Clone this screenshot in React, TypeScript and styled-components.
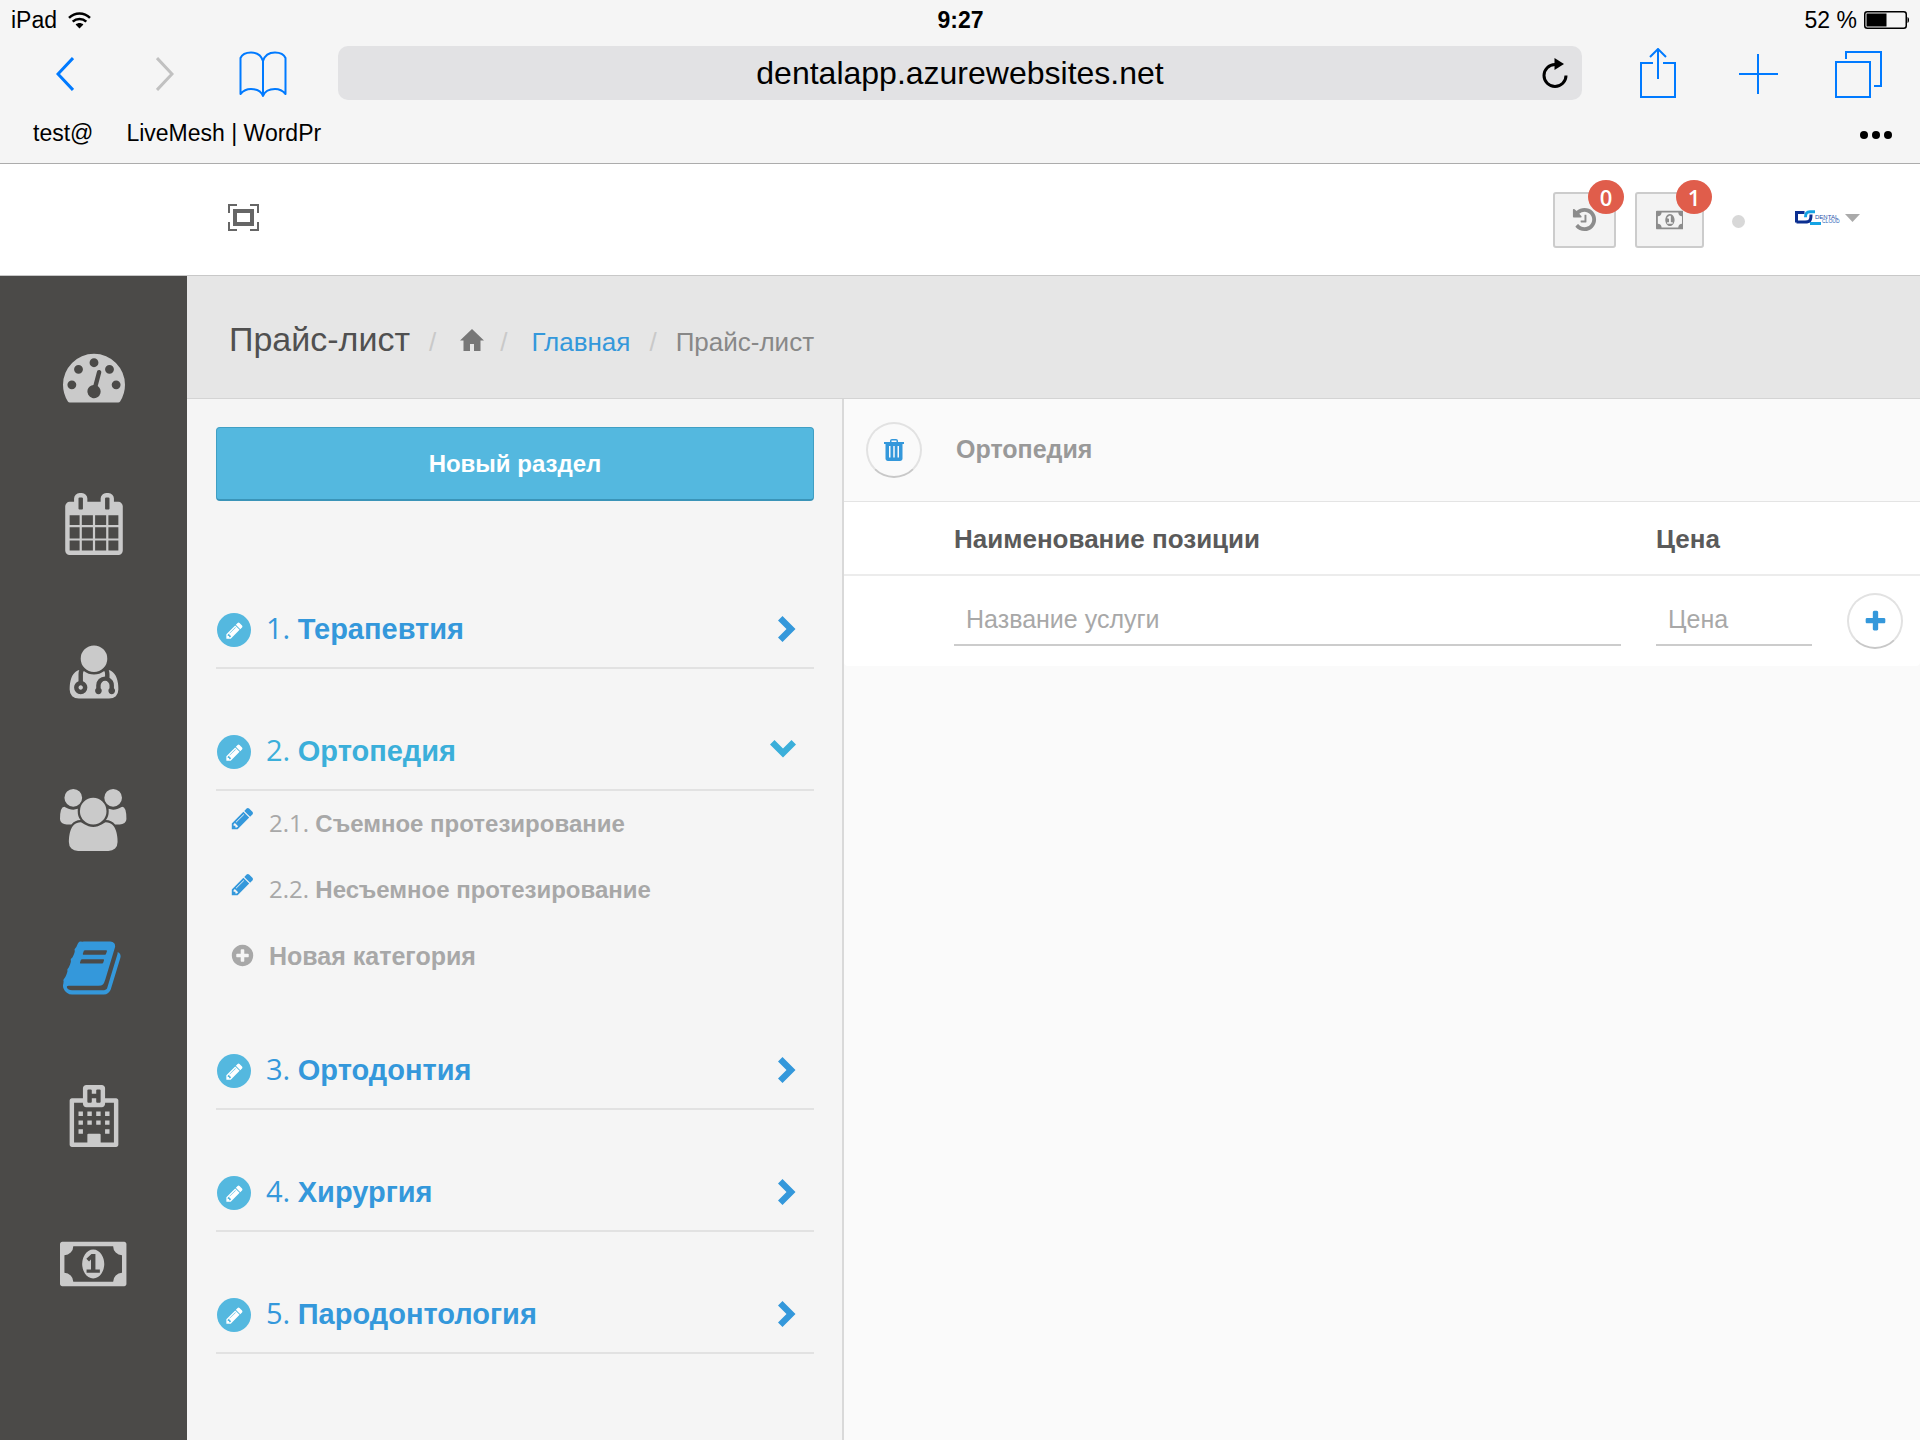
import React, { useState } from "react";
import styled, { createGlobalStyle, css } from "styled-components";

const sans = `"Liberation Sans", Arial, sans-serif`;
const humanist = `"Open Sans", "Noto Sans", sans-serif`;
const ios = "#007aff";
const blue = "#3498db";
const sky = "#54b8df";
const teal = "#3bafda";

const GlobalStyle = createGlobalStyle`
  *, *::before, *::after { box-sizing: border-box; }
  body { margin: 0; font-family: ${sans}; background: #fafafa; color: #555; }
  button { font: inherit; color: inherit; background: none; border: 0; padding: 0; cursor: pointer; }
  a { color: inherit; text-decoration: none; }
  h1, h2, ul, ol, p { margin: 0; padding: 0; font-weight: normal; }
  ul, ol { list-style: none; }
  svg { display: block; flex: none; }
`;

/* ---------- icons ---------- */

const paths = {
  gauge:
    "M384 1152q0-53-37.5-90.5t-90.5-37.5-90.5 37.5-37.5 90.5 37.5 90.5 90.5 37.5 90.5-37.5 37.5-90.5zm192-448q0-53-37.5-90.5t-90.5-37.5-90.5 37.5-37.5 90.5 37.5 90.5 90.5 37.5 90.5-37.5 37.5-90.5zm428 481l101-382q6-26-7.5-48.5t-38.5-29.5-48 6.5-30 39.5l-101 382q-60 5-107 43.5t-63 98.5q-20 77 20 146t117 89 146-20 89-117q16-60-6-117t-72-91zm660-33q0-53-37.5-90.5t-90.5-37.5-90.5 37.5-37.5 90.5 37.5 90.5 90.5 37.5 90.5-37.5 37.5-90.5zm-640-640q0-53-37.5-90.5t-90.5-37.5-90.5 37.5-37.5 90.5 37.5 90.5 90.5 37.5 90.5-37.5 37.5-90.5zm448 192q0-53-37.5-90.5t-90.5-37.5-90.5 37.5-37.5 90.5 37.5 90.5 90.5 37.5 90.5-37.5 37.5-90.5zm320 448q0 261-141 483-19 29-54 29h-1402q-35 0-54-29-141-221-141-483 0-182 71-348t191-286 286-191 348-71 348 71 286 191 191 286 71 348z",
  calendar:
    "M192 1664h288v-288h-288v288zm352 0h320v-288h-320v288zm-352-352h288v-320h-288v320zm352 0h320v-320h-320v320zm-352-384h288v-288h-288v288zm736 736h320v-288h-320v288zm-384-736h320v-288h-320v288zm768 736h288v-288h-288v288zm-384-352h320v-320h-320v320zm-352-864v-288q0-13-9.5-22.5t-22.5-9.5h-64q-13 0-22.5 9.5t-9.5 22.5v288q0 13 9.5 22.5t22.5 9.5h64q13 0 22.5-9.5t9.5-22.5zm736 864h288v-320h-288v320zm-384-384h320v-288h-320v288zm384 0h288v-288h-288v288zm32-480v-288q0-13-9.5-22.5t-22.5-9.5h-64q-13 0-22.5 9.5t-9.5 22.5v288q0 13 9.5 22.5t22.5 9.5h64q13 0 22.5-9.5t9.5-22.5zm384-64v1280q0 52-38 90t-90 38h-1408q-52 0-90-38t-38-90v-1280q0-52 38-90t90-38h128v-96q0-66 47-113t113-47h64q66 0 113 47t47 113v96h384v-96q0-66 47-113t113-47h64q66 0 113 47t47 113v96h128q52 0 90 38t38 90z",
  doctor:
    "M576 1344q0 26-19 45t-45 19-45-19-19-45 19-45 45-19 45 19 19 45zm1024 61q0 121-73 190t-194 69h-874q-121 0-194-69t-73-190q0-68 5.5-131t24-138 47.5-132.5 81-103 120-60.5q-22 52-22 120v203q-58 20-93 70t-35 111q0 80 56 136t136 56 136-56 56-136q0-61-35.5-111t-92.5-70v-203q0-62 25-93 132 104 295 104t295-104q25 31 25 93v64q-106 0-181 75t-75 181v89q-32 29-32 71 0 40 28 68t68 28 68-28 28-68q0-42-32-71v-89q0-52 38-90t90-38 90 38 38 90v89q-32 29-32 71 0 40 28 68t68 28 68-28 28-68q0-42-32-71v-89q0-68-34.5-127.5t-93.5-93.5q0-10 .5-42.5t0-48-2.5-41.5-7-47-13-40q68 15 120 60.5t81 103 47.5 132.5 24 138 5.5 131zm-320-893q0 159-112.5 271.5t-271.5 112.5-271.5-112.5-112.5-271.5 112.5-271.5 271.5-112.5 271.5 112.5 112.5 271.5z",
  people:
    "M593 896q-162 5-265 128h-134q-82 0-138-40.5t-56-118.5q0-353 124-353 6 0 43.5 21t97.5 42.5 119 21.5q67 0 133-23-5 37-5 66 0 159 81 256zm1071 637q0 120-73 189.5t-194 69.5h-874q-121 0-194-69.5t-73-189.5q0-53 3.5-103.5t14-109 26.5-108.5 43-97.5 62-81 85.5-53.5 111.5-20q10 0 43 21.5t73 48 107 48 135 21.5 135-21.5 107-48 73-48 43-21.5q61 0 111.5 20t85.5 53.5 62 81 43 97.5 26.5 108.5 14 109 3.5 103.5zm-1024-1277q0 106-75 181t-181 75-181-75-75-181 75-181 181-75 181 75 75 181zm704 384q0 159-112.5 271.5t-271.5 112.5-271.5-112.5-112.5-271.5 112.5-271.5 271.5-112.5 271.5 112.5 112.5 271.5zm576 225q0 78-56 118.5t-138 40.5h-134q-103-123-265-128 81-97 81-256 0-29-5-66 66 23 133 23 59 0 119-21.5t97.5-42.5 43.5-21q124 0 124 353zm-128-609q0 106-75 181t-181 75-181-75-75-181 75-181 181-75 181 75 75 181z",
  book:
    "M1639 478q40 57 18 129l-275 906q-19 64-76.5 107.5t-122.5 43.5h-923q-77 0-148.5-53.5t-99.5-131.5q-24-67-2-127 0-4 3-27t4-37q1-8-3-21.5t-3-19.5q2-11 8-21t16.5-23.5 16.5-23.5q23-38 45-91.5t30-91.5q3-10 .5-30t-.5-28q3-11 17-28t17-23q21-36 42-92t25-90q1-9-2.5-32t.5-28q4-13 22-30.5t22-22.5q19-26 42.5-84.5t27.5-96.5q1-8-3-25.5t-2-26.5q2-8 9-18t18-23 17-21q8-12 16.5-30.5t15-35 16-36 19.5-32 26.5-23.5 36-11.5 47.5 5.5l-1 3q38-9 51-9h761q74 0 114 56t18 130l-274 906q-36 119-71.5 153.5t-128.5 34.5h-869q-27 0-38 15-11 16-1 43 24 70 144 70h923q29 0 56-15.5t35-41.5l300-987q7-22 5-57 38 15 59 43zm-1064 2q-4 13 2 22.5t20 9.5h608q13 0 25.5-9.5t16.5-22.5l21-64q4-13-2-22.5t-20-9.5h-608q-13 0-25.5 9.5t-16.5 22.5zm-83 256q-4 13 2 22.5t20 9.5h608q13 0 25.5-9.5t16.5-22.5l21-64q4-13-2-22.5t-20-9.5h-608q-13 0-25.5 9.5t-16.5 22.5z",
  money:
    "M768 1152h384v-96h-128v-448h-114l-148 137 77 80q42-37 55-57h2v288h-128v96zm512-256q0 70-21 142t-59.5 134-101.5 101-138 39-138-39-101.5-101-59.5-134-21-142 21-142 59.5-134 101.5-101 138-39 138 39 101.5 101 59.5 134 21 142zm512 256v-512q-106 0-181-75t-75-181h-1152q0 106-75 181t-181 75v512q106 0 181 75t75 181h1152q0-106 75-181t181-75zm128-832v1152q0 26-19 45t-45 19h-1792q-26 0-45-19t-19-45v-1152q0-26 19-45t45-19h1792q26 0 45 19t19 45z",
  history:
    "M1664 896q0 156-61 298t-164 245-245 164-298 61q-172 0-327-72.5t-264-204.5q-7-10-6.5-22.5t8.5-20.5l137-138q10-9 25-9 16 2 23 12 73 95 179 147t225 52q104 0 198.5-40.5t163.5-109.5 109.5-163.5 40.5-198.5-40.5-198.5-109.5-163.5-163.5-109.5-198.5-40.5q-98 0-188 35.5t-160 101.5l137 138q31 30 14 69-17 40-59 40h-448q-26 0-45-19t-19-45v-448q0-42 40-59 39-17 69 14l130 129q107-101 244.5-156.5t284.5-55.5q156 0 298 61t245 164 164 245 61 298zm-640-288v448q0 14-9 23t-23 9h-320q-14 0-23-9t-9-23v-64q0-14 9-23t23-9h224v-352q0-14 9-23t23-9h64q14 0 23 9t9 23z",
  pencil:
    "M491 1536l91-91-235-235-91 91v107h128v128h107zm523-928q0-22-22-22-10 0-17 7l-542 542q-7 7-7 17 0 22 22 22 10 0 17-7l542-542q7-7 7-17zm-54-192l416 416-832 832h-416v-416zm683 96q0 53-37 90l-166 166-416-416 166-165q36-38 90-38 53 0 91 38l235 234q37 39 37 91z",
  plus:
    "M1600 736v192q0 40-28 68t-68 28h-416v416q0 40-28 68t-68 28h-192q-40 0-68-28t-28-68v-416h-416q-40 0-68-28t-28-68v-192q0-40 28-68t68-28h416v-416q0-40 28-68t68-28h192q40 0 68 28t28 68v416h416q40 0 68 28t28 68z",
  plusCircle:
    "M1344 960v-128q0-26-19-45t-45-19h-256v-256q0-26-19-45t-45-19h-128q-26 0-45 19t-19 45v256h-256q-26 0-45 19t-19 45v128q0 26 19 45t45 19h256v256q0 26 19 45t45 19h128q26 0 45-19t19-45v-256h256q26 0 45-19t19-45zm320-64q0 209-103 385.5t-279.5 279.5-385.5 103-385.5-103-279.5-279.5-103-385.5 103-385.5 279.5-279.5 385.5-103 385.5 103 279.5 279.5 103 385.5z",
  hospital:
    "M448 768h128v128h-128zM704 768h128v128h-128zM960 768h128v128h-128zM1216 768h128v128h-128zM448 1024h128v128h-128zM704 1024h128v128h-128zM960 1024h128v128h-128zM1216 1024h128v128h-128zM448 1280h128v128h-128zM1216 1280h128v128h-128zM1088 1664h384v-1152h-256v32q0 40-28 68t-68 28h-448q-40 0-68-28t-28-68v-32h-256v1152h384v-224q0-13 9.500-22.500t22.500-9.500h320q13 0 22.500 9.500t9.500 22.500zM1088 480v-320q0-13-9.500-22.500t-22.500-9.500h-64q-13 0-22.500 9.500t-9.500 22.500v96h-128v-96q0-13-9.500-22.500t-22.500-9.500h-64q-13 0-22.500 9.500t-9.500 22.500v320q0 13 9.500 22.500t22.500 9.500h64q13 0 22.500-9.500t9.500-22.500v-96h128v96q0 13 9.500 22.500t22.500 9.500h64q13 0 22.500-9.500t9.500-22.500zM1600 448v1280q0 26-19 45t-45 19h-1280q-26 0-45-19t-19-45v-1280q0-26 19-45t45-19h320v-288q0-40 28-68t68-28h448q40 0 68 28t28 68v288h320q26 0 45 19t19 45z",
};

type GlyphName = keyof typeof paths;
const wide: GlyphName[] = ["people", "money"];

function Glyph({ name, size }: { name: GlyphName; size: number }) {
  const units = wide.includes(name) ? 1920 : 1792;
  return (
    <svg width={(size * units) / 1792} height={size} viewBox={`0 0 ${units} 1792`} fill="currentColor" fillRule={name === "hospital" ? "evenodd" : "nonzero"} aria-hidden>
      <path d={paths[name]} />
    </svg>
  );
}

const Chevron = ({ open }: { open: boolean }) =>
  open ? (
    <svg width="26" height="26" viewBox="0 0 26 26" fill="currentColor" aria-hidden>
      <path d="M0 6.500L4.500 2 13 10.500 21.500 2 26 6.500 13 19.500z" />
    </svg>
  ) : (
    <svg width="18" height="26" viewBox="0 0 18 26" fill="currentColor" aria-hidden>
      <path d="M4.500 0L17.500 13 4.500 26 0 21.500 8.500 13 0 4.500z" />
    </svg>
  );

const WifiIcon = () => (
  <svg width="23" height="17" viewBox="0 0 23 17" aria-hidden>
    <g fill="none" stroke="#000" strokeWidth="2.500">
      <path d="M1 5.800C7 0 16 0 22 5.800" />
      <path d="M4.700 9.600C8.500 6 14.500 6 18.300 9.600" />
    </g>
    <path d="M7.600 12.500c2.300-2 5.500-2 7.800 0L11.500 16.600z" />
  </svg>
);

const BatteryIcon = () => (
  <svg width="46" height="18" viewBox="0 0 46 18" aria-hidden>
    <rect x=".75" y=".75" width="41.500" height="16.500" rx="2.500" fill="none" stroke="#000" strokeWidth="1.500" />
    <rect x="2.500" y="2.500" width="20" height="13" />
    <path d="M43.500 6c2 .5 2 5.500 0 6z" />
  </svg>
);

const LineIcon = ({ w, h, sw = 2, children }: { w: number; h: number; sw?: number; children: React.ReactNode }) => (
  <svg width={w} height={h} viewBox={`0 0 ${w} ${h}`} fill="none" stroke="currentColor" strokeWidth={sw} aria-hidden>
    {children}
  </svg>
);

const DentalLogo = () => (
  <svg width="46" height="15" viewBox="0 0 46 15" role="img" aria-label="Dental Cloud">
    <path d="M1.500 12.500v-10h8" fill="none" stroke="#0b2f91" strokeWidth="3" />
    <path d="M1.500 12h8.500c5 0 6-1.500 6-7.500" fill="none" stroke="#0b2f91" strokeWidth="3" />
    <path d="M20 1.800h-5c-3.500 0-4.500 1.700-4.500 5.500" fill="none" stroke="#14a3e4" strokeWidth="3" />
    <path d="M15 13.500h11" fill="none" stroke="#14a3e4" strokeWidth="3" />
    <text x="20" y="9" fontFamily={sans} fontSize="6" fill="#1f4fa8">DENTAL</text>
    <text x="27" y="13" fontFamily={sans} fontSize="5" fill="#1f5fb8">CLOUD</text>
  </svg>
);

/* ---------- browser chrome ---------- */

const Page = styled.div`
  min-height: 100vh;
  display: flex;
  flex-direction: column;
`;

const Browser = styled.div`
  background: #f5f5f5;
  color: #000;
  border-bottom: 1px solid #acacac;
  font-size: 23px;
`;

const StatusBar = styled.div`
  display: grid;
  grid-template-columns: 1fr auto 1fr;
  align-items: center;
  height: 46px;
  padding: 0 10px 6px 11px;
`;

const StatusGroup = styled.div<{ $end?: boolean }>`
  display: flex;
  align-items: center;
  gap: ${(p) => (p.$end ? 7 : 11)}px;
  justify-content: ${(p) => (p.$end ? "flex-end" : "flex-start")};
`;

const Clock = styled.time`
  font-weight: bold;
`;

const NavBar = styled.div`
  display: flex;
  height: 54px;
  padding: 0 11px 0 15px;
`;

const NavButton = styled.button<{ $off?: boolean }>`
  width: 100px;
  padding-top: 2px;
  display: grid;
  place-items: center;
  color: ${(p) => (p.$off ? "#c1c1c1" : ios)};
`;

const AddressBar = styled.div`
  flex: 1;
  min-width: 0;
  display: flex;
  margin: 0 27px 0 23px;
  padding-left: 54px;
  border-radius: 10px;
  background: #e2e2e4;
`;

const Address = styled.input`
  flex: 1;
  min-width: 0;
  border: 0;
  background: none;
  text-align: center;
  font: 32px ${sans};
  color: #000;
`;

const ReloadButton = styled.button`
  width: 54px;
  display: grid;
  place-items: center;
`;

const BookmarkBar = styled.nav`
  display: flex;
  align-items: center;
  gap: 33px;
  height: 63px;
  padding: 4px 28px 0 33px;
`;

const MoreButton = styled.button`
  margin-left: auto;
  padding-top: 2px;
`;

/* ---------- application header ---------- */

const Header = styled.header`
  display: flex;
  align-items: center;
  height: 112px;
  padding: 0 60px 4px 228px;
  background: #fff;
  border-bottom: 1px solid #c8c8c8;
`;

const HeaderTools = styled.div`
  display: flex;
  align-items: center;
  margin-left: auto;
`;

const PlainButton = styled.button<{ $color?: string }>`
  color: ${(p) => p.$color ?? "inherit"};
`;

const NoticeButton = styled.button<{ $width: number }>`
  position: relative;
  display: grid;
  place-items: center;
  width: ${(p) => p.$width}px;
  height: 56px;
  margin: 4px 19px 0 0;
  border: 2px solid #ccc;
  border-radius: 3px;
  background: #f3f3f3;
  color: #8c8c8c;
`;

const Badge = styled.span`
  position: absolute;
  top: -14px;
  right: -10px;
  width: 36px;
  height: 34px;
  border-radius: 50%;
  background: #e05d4b;
  color: #fff;
  font: 600 22px/34px ${humanist};
`;

const Dot = styled.span`
  width: 13px;
  height: 13px;
  margin: 7px 50px 0 9px;
  border-radius: 50%;
  background: #d8d8d8;
`;

const Profile = styled.button`
  display: flex;
  align-items: center;
  gap: 4px;
  color: #aaa;
`;

/* ---------- body ---------- */

const Body = styled.div`
  flex: 1;
  display: flex;
`;

const Sidebar = styled.nav`
  flex: none;
  width: 187px;
  padding-top: 69px;
  background: #4b4a48;
`;

const SideList = styled.ul`
  display: grid;
  gap: 86px;
`;

const SideLink = styled.a<{ $active?: boolean }>`
  display: grid;
  place-items: center;
  height: 62px;
  color: ${(p) => (p.$active ? blue : "#cacaca")};
`;

const Main = styled.main`
  flex: 1;
  min-width: 0;
  display: flex;
  flex-direction: column;
`;

const TitleBar = styled.div`
  display: flex;
  align-items: baseline;
  height: 123px;
  padding: 41px 42px 0;
  background: #e6e6e6;
  border-bottom: 1px solid #d4d4d4;
`;

const Title = styled.h1`
  font-size: 34px;
  line-height: 44px;
  color: #505050;
`;

const Crumbs = styled.ol`
  display: flex;
  align-items: baseline;
  font-size: 26px;
  line-height: 44px;
`;

const Crumb = styled.li<{ $before?: number; $after?: number }>`
  color: #888;
  &::before {
    content: "/";
    margin: 0 ${(p) => p.$after ?? 19}px 0 ${(p) => p.$before ?? 19}px;
    color: #c9c9c9;
  }
  a { color: ${blue}; }
  svg { display: inline-block; color: #777; }
`;

const Columns = styled.div`
  flex: 1;
  display: grid;
  grid-template-columns: 657fr 1076fr;
`;

const Sections = styled.section`
  padding: 28px 28px 60px 29px;
  background: #f5f5f5;
  border-right: 2px solid #d9d9d9;
`;

const PrimaryButton = styled.button`
  display: block;
  width: 100%;
  height: 74px;
  margin-bottom: 46px;
  border: 1px solid #409fc4;
  border-bottom: 2px solid #3a94b8;
  border-radius: 4px;
  background: ${sky};
  color: #fff;
  font-weight: bold;
  font-size: 24px;
`;

const SectionRow = styled.div<{ $open: boolean }>`
  display: flex;
  align-items: center;
  gap: 14px;
  height: 122px;
  padding: 46px 18px 0 1px;
  border-bottom: 2px solid #e2e2e2;
  color: ${(p) => (p.$open ? teal : blue)};
`;

const EditButton = styled.button`
  flex: none;
  width: 34px;
  height: 34px;
  display: grid;
  place-items: center;
  border-radius: 50%;
  background: ${sky};
  color: #fff;
`;

const SectionToggle = styled.button`
  flex: 1;
  display: flex;
  align-items: center;
  justify-content: space-between;
  text-align: left;
  font-size: 29px;
  line-height: 40px;
  padding: 0 0 3px 1px;
`;

const Numbering = styled.span`
  font-family: ${humanist};
  font-weight: 500;
  line-height: 0;
`;

const Name = styled.b`
  font-weight: bold;
`;

const SubList = styled.ul`
  padding-left: 14px;
`;

const subItem = css`
  display: flex;
  align-items: center;
  gap: 14px;
  height: 66px;
  font-size: 24px;
  line-height: 32px;
  color: #a8a8a8;
`;

const SubItem = styled.li`
  ${subItem}
`;

const AddCategory = styled.button`
  ${subItem}
  height: 65px;
  font-size: 25px;
`;

const SubEdit = styled.button`
  padding-bottom: 12px;
  color: ${blue};
`;

/* ---------- price table ---------- */

const Prices = styled.section`
  background: #fafafa;
`;

const PricesHead = styled.div`
  display: flex;
  align-items: center;
  gap: 34px;
  height: 103px;
  padding-left: 22px;
  border-bottom: 1px solid #e4e4e4;
`;

const PricesTitle = styled.h2`
  padding-bottom: 2px;
  font-weight: bold;
  font-size: 25px;
  color: #999;
`;

const RoundButton = styled.button`
  width: 56px;
  height: 56px;
  display: grid;
  place-items: center;
  border: 2px solid #e2e2e2;
  border-bottom-color: #c8c8c8;
  border-radius: 50%;
  color: ${blue};
`;

const Table = styled.table`
  width: 100%;
  table-layout: fixed;
  border-collapse: separate;
  border-spacing: 0;
  background: #fff;
  border-radius: 0 0 4px 4px;
`;

const HeadCell = styled.th<{ $width?: number }>`
  width: ${(p) => (p.$width ? `${p.$width}px` : "auto")};
  height: 74px;
  padding: 2px 0 0;
  border-bottom: 2px solid #ececec;
  text-align: left;
  font-size: 26px;
  color: #5a5a5a;
`;

const Cell = styled.td`
  height: 90px;
  padding: 0 35px 0 0;
  vertical-align: middle;
  &:last-child { padding-right: 17px; }
`;

const Field = styled.input`
  display: block;
  width: 100%;
  height: 50px;
  padding: 0 12px 2px;
  border: 0;
  border-bottom: 2px solid #ccc;
  background: none;
  font: 25px ${sans};
  color: #555;
  &::placeholder { color: #a8a8a8; opacity: 1; }
`;

const menu: { name: GlyphName; label: string }[] = [
  { name: "gauge", label: "Панель" },
  { name: "calendar", label: "Календарь" },
  { name: "doctor", label: "Врачи" },
  { name: "people", label: "Пациенты" },
  { name: "book", label: "Прайс-лист" },
  { name: "hospital", label: "Клиника" },
  { name: "money", label: "Финансы" },
];

const sections = [
  { name: "Терапевтия", items: [] },
  { name: "Ортопедия", items: ["Съемное протезирование", "Несъемное протезирование"] },
  { name: "Ортодонтия", items: [] },
  { name: "Хирургия", items: [] },
  { name: "Пародонтология", items: [] },
];

export default function App() {
  const [open, setOpen] = useState(1);

  return (
    <Page>
      <GlobalStyle />
      <Browser>
        <StatusBar>
          <StatusGroup>
            iPad
            <WifiIcon />
          </StatusGroup>
          <Clock>9:27</Clock>
          <StatusGroup $end>
            52 %
            <BatteryIcon />
          </StatusGroup>
        </StatusBar>
        <NavBar>
          <NavButton aria-label="Назад">
            <LineIcon w={18} h={34} sw={3}><path d="M17 1L2 17l15 16" /></LineIcon>
          </NavButton>
          <NavButton aria-label="Вперёд" $off>
            <LineIcon w={18} h={34} sw={3}><path d="M1 1l15 16L1 33" /></LineIcon>
          </NavButton>
          <NavButton aria-label="Закладки">
            <LineIcon w={52} h={46}>
              <path d="M24 10C22 3.500 17 1.500 12 1.500 7 1.500 3 3.500 1.500 7v36c2.500-3 6.500-5 10.500-5s10 1.500 12 7c2-5.500 8-7 12-7s8 2 10.500 5V7C45 3.500 41 1.500 36 1.500c-5 0-10 2-12 8.500zM24 10v34" strokeLinejoin="round" />
            </LineIcon>
          </NavButton>
          <AddressBar>
            <Address aria-label="Адрес" defaultValue="dentalapp.azurewebsites.net" />
            <ReloadButton aria-label="Обновить">
              <LineIcon w={26} h={30} sw={3}>
                <path d="M24 17.500A11 11 0 1 1 13 6.500h2" />
                <path d="M12.500 0l9.500 6-9.500 6z" fill="currentColor" stroke="none" />
              </LineIcon>
            </ReloadButton>
          </AddressBar>
          <NavButton aria-label="Поделиться">
            <LineIcon w={40} h={52}>
              <path d="M14 15H2v34h34V15H24M19 31V1M11 9l8-8 8 8" />
            </LineIcon>
          </NavButton>
          <NavButton aria-label="Новая вкладка">
            <LineIcon w={40} h={40}><path d="M19 0v40M-1 20h40" /></LineIcon>
          </NavButton>
          <NavButton aria-label="Вкладки">
            <LineIcon w={48} h={48}>
              <path d="M1 12h34v35H1zM11 9V2h35v34h-7" />
            </LineIcon>
          </NavButton>
        </NavBar>
        <BookmarkBar>
          <a href="#test">test@</a>
          <a href="#livemesh">LiveMesh | WordPr</a>
          <MoreButton aria-label="Ещё">
            <svg width="32" height="8" viewBox="0 0 32 8" aria-hidden>
              <circle cx="4" cy="4" r="4" />
              <circle cx="16" cy="4" r="4" />
              <circle cx="28" cy="4" r="4" />
            </svg>
          </MoreButton>
        </BookmarkBar>
      </Browser>

      <Header>
        <PlainButton aria-label="На весь экран" $color="#666">
          <LineIcon w={31} h={27}>
            <path d="M1 9V1h8M22 1h8v8M30 18v8h-8M9 26H1v-8" />
            <path d="M7 7h17v13H7z" strokeWidth="4" />
          </LineIcon>
        </PlainButton>
        <HeaderTools>
          <NoticeButton aria-label="История, 0" $width={63}>
            <Glyph name="history" size={27} />
            <Badge>0</Badge>
          </NoticeButton>
          <NoticeButton aria-label="Платежи, 1" $width={69}>
            <Glyph name="money" size={26} />
            <Badge>1</Badge>
          </NoticeButton>
          <Dot />
          <Profile aria-label="Профиль">
            <DentalLogo />
            <svg width="15" height="8" viewBox="0 0 15 8" fill="currentColor" aria-hidden><path d="M0 0h15L7.500 8z" /></svg>
          </Profile>
        </HeaderTools>
      </Header>

      <Body>
        <Sidebar>
          <SideList>
            {menu.map((m) => (
              <li key={m.name}>
                <SideLink href={`#${m.name}`} aria-label={m.label} $active={m.name === "book"}>
                  <Glyph name={m.name} size={62} />
                </SideLink>
              </li>
            ))}
          </SideList>
        </Sidebar>

        <Main>
          <TitleBar>
            <Title>Прайс-лист</Title>
            <Crumbs>
              <Crumb $after={24}>
                <a href="#home" aria-label="Домой">
                  <svg width="24" height="22" viewBox="0 0 24 22" fill="currentColor" aria-hidden>
                    <path d="M12 0l12 11.500h-3.500V22H14v-7h-4v7H3.500V11.500H0z" />
                  </svg>
                </a>
              </Crumb>
              <Crumb $before={16} $after={24}><a href="#main">Главная</a></Crumb>
              <Crumb aria-current="page">Прайс-лист</Crumb>
            </Crumbs>
          </TitleBar>

          <Columns>
            <Sections>
              <PrimaryButton>Новый раздел</PrimaryButton>
              {sections.map((s, i) => (
                <React.Fragment key={s.name}>
                  <SectionRow $open={open === i}>
                    <EditButton aria-label={`Изменить: ${s.name}`}>
                      <Glyph name="pencil" size={19} />
                    </EditButton>
                    <SectionToggle aria-expanded={open === i} onClick={() => setOpen(open === i ? -1 : i)}>
                      <span>
                        <Numbering>{i + 1}. </Numbering>
                        <Name>{s.name}</Name>
                      </span>
                      <Chevron open={open === i} />
                    </SectionToggle>
                  </SectionRow>
                  {open === i && (
                    <SubList>
                      {s.items.map((item, k) => (
                        <SubItem key={item}>
                          <SubEdit aria-label={`Изменить: ${item}`}>
                            <Glyph name="pencil" size={25} />
                          </SubEdit>
                          <span>
                            <Numbering>{i + 1}.{k + 1}. </Numbering>
                            <Name>{item}</Name>
                          </span>
                        </SubItem>
                      ))}
                      <li>
                        <AddCategory>
                          <Glyph name="plusCircle" size={25} />
                          <Name>Новая категория</Name>
                        </AddCategory>
                      </li>
                    </SubList>
                  )}
                </React.Fragment>
              ))}
            </Sections>

            <Prices>
              <PricesHead>
                <RoundButton aria-label="Удалить раздел">
                  <svg width="20" height="22" viewBox="0 0 20 22" fill="currentColor" aria-hidden>
                    <path fillRule="evenodd" d="M6 3V2c0-1.200.8-2 2-2h4c1.200 0 2 .8 2 2v1h6v2h-1.500v14.500c0 1.500-1 2.500-2.500 2.500H4c-1.500 0-2.500-1-2.500-2.500V5H0V3zM7.500 3h5V1.500h-5zM5 7v11.500h1.500V7zM9.250 7v11.500h1.500V7zM13.500 7v11.500H15V7z" />
                  </svg>
                </RoundButton>
                <PricesTitle>Ортопедия</PricesTitle>
              </PricesHead>
              <Table>
                <thead>
                  <tr>
                    <HeadCell as="td" $width={110} />
                    <HeadCell scope="col">Наименование позиции</HeadCell>
                    <HeadCell scope="col" $width={191}>Цена</HeadCell>
                    <HeadCell as="td" $width={73} />
                  </tr>
                </thead>
                <tbody>
                  <tr>
                    <Cell />
                    <Cell><Field aria-label="Название услуги" placeholder="Название услуги" /></Cell>
                    <Cell><Field aria-label="Цена" placeholder="Цена" /></Cell>
                    <Cell>
                      <RoundButton aria-label="Добавить">
                        <Glyph name="plus" size={25} />
                      </RoundButton>
                    </Cell>
                  </tr>
                </tbody>
              </Table>
            </Prices>
          </Columns>
        </Main>
      </Body>
    </Page>
  );
}
